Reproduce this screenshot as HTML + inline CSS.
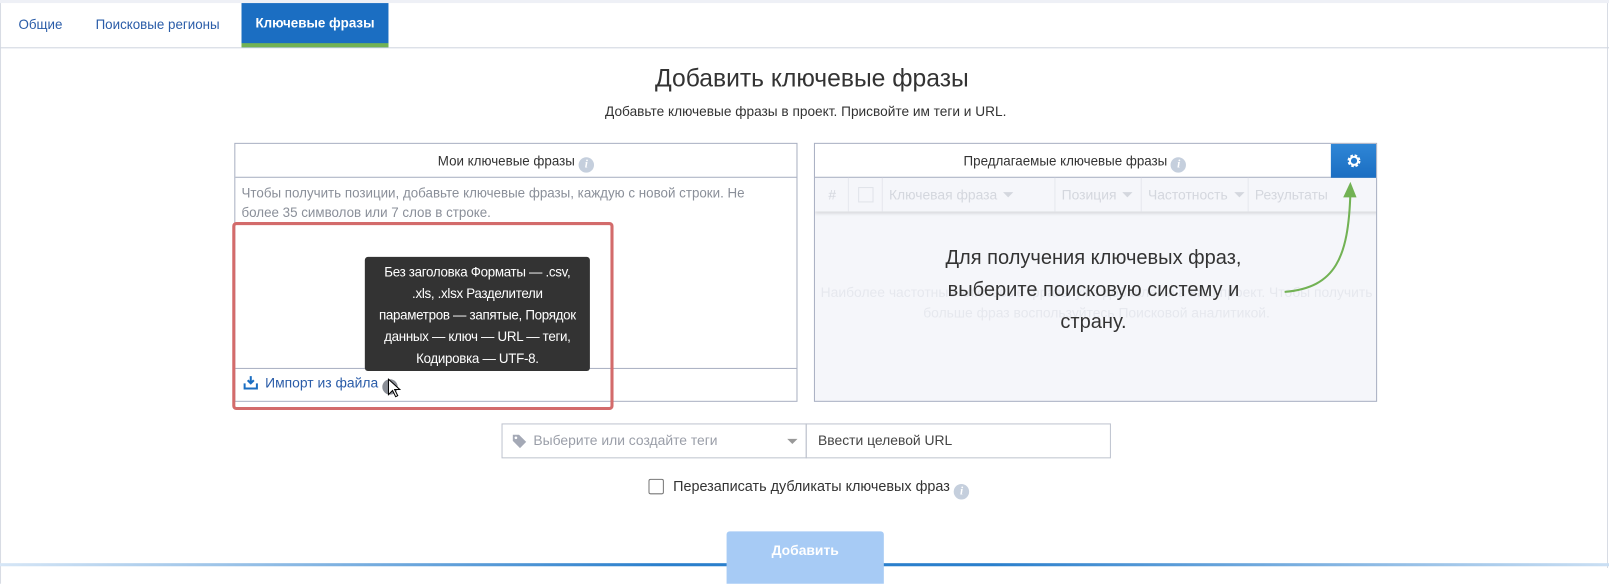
<!DOCTYPE html>
<html><head><meta charset="utf-8"><style>
*{box-sizing:border-box;margin:0;padding:0}
body{width:1609px;height:568px;overflow:hidden;background:#fff;font-family:"Liberation Sans",sans-serif;position:relative;color:#333}
.a{position:absolute}
#w{position:absolute;left:0;top:0;width:1566px;height:553px;transform:scale(1.0277);transform-origin:0 0}
.info{display:inline-block;width:15px;height:15px;border-radius:50%;background:#c5cfdd;color:#fff;font:italic bold 11px/15px "Liberation Serif",serif;text-align:center;vertical-align:-2px}
.th{position:absolute;top:0;height:33px;line-height:33px;color:#d4d7de;font-size:13.5px;border-right:1px solid #e6e8ee;padding-left:6px;white-space:nowrap;overflow:hidden}
.car{display:inline-block;width:0;height:0;border-left:5px solid transparent;border-right:5px solid transparent;border-top:5px solid #d4d7de;vertical-align:2px;margin-left:6px}
.nw{white-space:nowrap}
</style></head><body>
<div class="a" style="left:1607px;top:3px;width:1px;height:565px;background:#d8dce4"></div>
<div id="w">
<div class="a" style="left:0;top:0;width:1609px;height:3px;background:#eef0f6"></div>
<div class="a" style="left:0;top:3px;width:1px;height:565px;background:#d8dce4"></div>
<div class="a" style="left:0;top:46px;width:1609px;height:1px;background:#d0d6e0"></div>
<div class="a" style="left:18px;top:16px;font-size:13px;color:#2a5ca8">Общие</div>
<div class="a" style="left:93px;top:16px;font-size:13px;color:#2a5ca8">Поисковые регионы</div>
<div class="a" style="left:235px;top:3px;width:143px;height:43px;background:#1b6ec2;color:#fff;font-size:13px;font-weight:bold;text-align:center;line-height:40px">Ключевые фразы</div>
<div class="a" style="left:235px;top:42px;width:143px;height:4px;background:#72b254"></div>

<div class="a nw" style="left:0;width:1580px;top:63px;text-align:center;font-size:24px;color:#333">Добавить ключевые фразы</div>
<div class="a nw" style="left:0;width:1568px;top:101px;text-align:center;font-size:13.3px;color:#333">Добавьте ключевые фразы в проект. Присвойте им теги и URL.</div>

<div class="a" style="left:228px;top:139px;width:548px;height:252px;border:1px solid #a9b0c2">
 <div style="height:33px;line-height:33px;text-align:center;font-size:13px;border-bottom:1px solid #a9b0c2">Мои ключевые фразы <span class="info">i</span></div>
 <div class="nw" style="padding:5px 6px;height:186px;font-size:13px;line-height:19px;color:#8a8f99;border-bottom:1px solid #a9b0c2">Чтобы получить позиции, добавьте ключевые фразы, каждую с новой строки. Не<br>более 35 символов или 7 слов в строке.</div>
 <div style="padding:6px 8px;font-size:13.5px;color:#2a5ca8"><svg width="14" height="14" viewBox="0 0 14 14" style="vertical-align:-2px;margin-right:7px"><path d="M7 1v7M4 5l3 3 3-3" stroke="#1b6ec2" stroke-width="2" fill="none"/><path d="M1 8v5h12V8" stroke="#1b6ec2" stroke-width="2" fill="none"/></svg>Импорт из файла <span class="info" style="background:#8a8e96">i</span></div>
</div>
<div class="a" style="left:226px;top:216px;width:371px;height:183px;border:3px solid #d36b6b;border-radius:4px"></div>
<div class="a nw" style="left:355px;top:250px;width:219px;height:111px;background:#333;border-radius:3px;color:#fff;font-size:13px;letter-spacing:-0.3px;line-height:21px;text-align:center;padding-top:4px">Без заголовка Форматы — .csv,<br>.xls, .xlsx Разделители<br>параметров — запятые, Порядок<br>данных — ключ — URL — теги,<br>Кодировка — UTF-8.</div>
<svg class="a" style="left:377px;top:368px" width="14" height="20" viewBox="0 0 14 20"><path d="M1 1v15l4-4 3 6 2-1-3-6h5z" fill="#fff" stroke="#000"/></svg>

<div class="a" style="left:792px;top:139px;width:548px;height:252px;border:1px solid #a9b0c2;background:#f5f6fa;overflow:hidden">
 <div style="height:33px;line-height:33px;text-align:center;font-size:13px;background:#fff;border-bottom:1px solid #a9b0c2;padding-right:40px">Предлагаемые ключевые фразы <span class="info">i</span></div>
 <div class="a" style="right:0;top:0;width:44px;height:33px;background:linear-gradient(#2f86d6,#1b6ec2)"><svg style="margin:9px 0 0 15px" width="15" height="15" viewBox="0 0 16 16"><circle cx="8" cy="8" r="5" fill="none" stroke="#fff" stroke-width="3.4" stroke-dasharray="2.4 1.6"/><circle cx="8" cy="8" r="4.2" fill="none" stroke="#fff" stroke-width="2"/></svg></div>
 <div class="a" style="left:0;top:33px;width:548px;height:33px;box-shadow:0 2px 3px rgba(0,0,0,.12)">
  <div class="th" style="left:0;width:33px;padding-left:13px">#</div>
  <div class="th" style="left:33px;width:33px;padding-left:9px"><span style="display:inline-block;width:15px;height:15px;border:1px solid #e0e3ea;vertical-align:-3px"></span></div>
  <div class="th" style="left:66px;width:168px">Ключевая фраза<span class="car"></span></div>
  <div class="th" style="left:234px;width:84px">Позиция<span class="car"></span></div>
  <div class="th" style="left:318px;width:104px">Частотность<span class="car"></span></div>
  <div class="th" style="left:422px;width:126px;border:none">Результаты</div>
 </div>
 <div class="a nw" style="left:0;top:135px;width:548px;text-align:center;font-size:13.5px;line-height:20px;color:#e6e8ee">Наиболее частотные ключевые фразы уже добавлены в ваш проект. Чтобы получить<br>больше фраз воспользуйтесь Поисковой аналитикой.</div>
 <div class="a nw" style="left:0;top:96px;width:542px;text-align:center;font-size:19.5px;line-height:31px;color:#333">Для получения ключевых фраз,<br>выберите поисковую систему и<br>страну.</div>
</div>
<svg class="a" style="left:1240px;top:170px" width="100" height="125"><path d="M10 114C60 110 72 80 74 18" stroke="#72b254" stroke-width="2" fill="none"/><path d="M67 22l7-15 6 15z" fill="#72b254"/></svg>

<div class="a" style="left:488px;top:412px;width:297px;height:34px;border:1px solid #bfc4cf;font-size:13.5px;line-height:32px;color:#9a9ea8;padding-left:30px">Выберите или создайте теги
 <svg class="a" style="left:9px;top:9px" width="15" height="15" viewBox="0 0 15 15"><path d="M1 1h6l7 7-6 6-7-7z" fill="#a4a9b6"/><circle cx="4" cy="4" r="1.3" fill="#fff"/></svg>
 <span class="a" style="right:8px;top:14px;border-left:5px solid transparent;border-right:5px solid transparent;border-top:5px solid #999"></span></div>
<div class="a" style="left:784px;top:412px;width:297px;height:34px;border:1px solid #bfc4cf;font-size:13.5px;line-height:32px;color:#444;padding-left:11px">Ввести целевой URL</div>
<div class="a" style="left:631px;top:466px;width:15px;height:15px;border:1px solid #777;border-radius:2px"></div>
<div class="a nw" style="left:655px;top:465px;font-size:14px;line-height:17px;color:#333">Перезаписать дубликаты ключевых фраз <span class="info" style="vertical-align:-3px">i</span></div>

<div class="a" style="left:0;top:548px;width:1609px;height:3px;background:linear-gradient(90deg,#d6e6f6,#2a7fcc 40%,#2a7fcc 60%,#d6e6f6)"></div>
<div class="a" style="left:707px;top:517px;width:153px;height:51px;background:#a7cbf5;border-radius:3px 3px 0 0;color:#fff;font-weight:bold;font-size:13.5px;text-align:center;line-height:37px">Добавить</div>
</div>
</body></html>
